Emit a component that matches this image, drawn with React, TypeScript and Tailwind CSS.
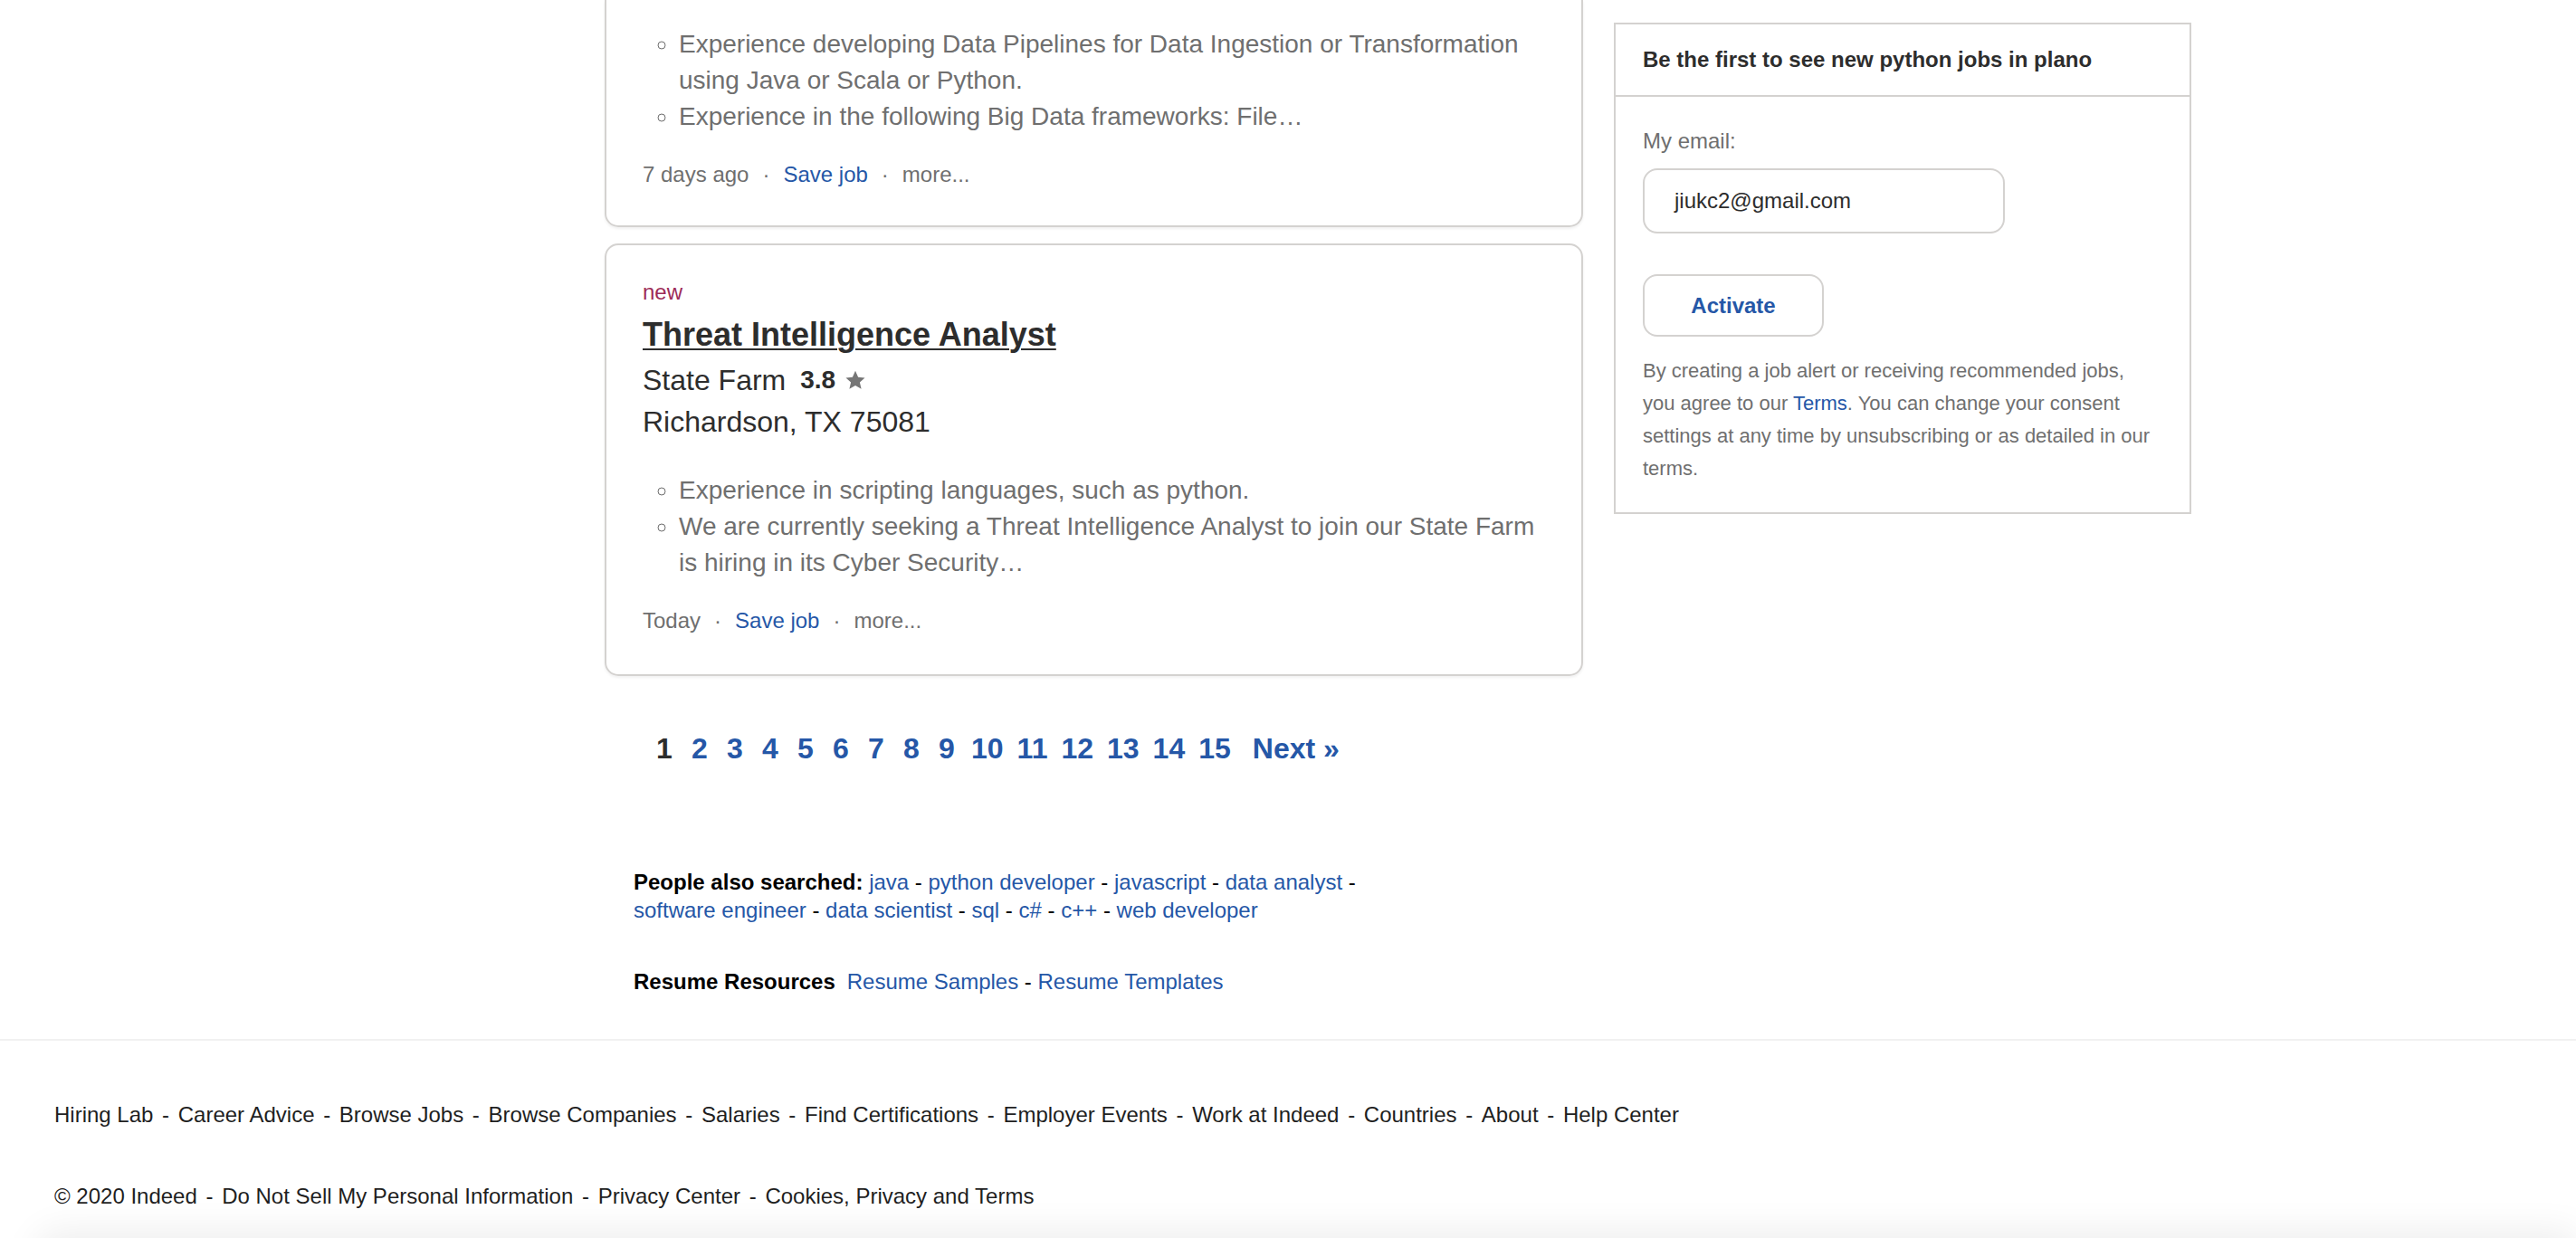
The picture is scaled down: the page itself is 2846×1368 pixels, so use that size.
const blue = "text-[#2557a7]";

function Dot() {
  return <span className="mx-[15px] text-[#6f6f6f]">·</span>;
}

function CardFooter({ age }: { age: string }) {
  return (
    <div className="mt-[26px] text-[24px] leading-[36px] text-[#6f6f6f]">
      <span>{age}</span>
      <Dot />
      <a className={blue}>Save job</a>
      <Dot />
      <span>more...</span>
    </div>
  );
}

function Snippet({ items }: { items: string[] }) {
  return (
    <ul className="list-[circle] pl-[40px] text-[28px] leading-[40px] text-[#6f6f6f]">
      {items.map((t) => (
        <li key={t}>{t}</li>
      ))}
    </ul>
  );
}

function Star() {
  return (
    <svg viewBox="0 0 24 24" className="ml-[10px] h-[24px] w-[24px] fill-[#767676]">
      <path d="M12 1.8l3.1 6.9 7.4.7-5.6 5 1.7 7.4L12 17.9l-6.6 3.9 1.7-7.4-5.6-5 7.4-.7z" />
    </svg>
  );
}

function Sep() {
  return <span className="mx-[3px]"> - </span>;
}

const pages = ["2", "3", "4", "5", "6", "7", "8", "9", "10", "11", "12", "13", "14", "15"];

const searches = [
  "java",
  "python developer",
  "javascript",
  "data analyst",
  "software engineer",
  "data scientist",
  "sql",
  "c#",
  "c++",
  "web developer",
];

const footerLinks = [
  "Hiring Lab",
  "Career Advice",
  "Browse Jobs",
  "Browse Companies",
  "Salaries",
  "Find Certifications",
  "Employer Events",
  "Work at Indeed",
  "Countries",
  "About",
  "Help Center",
];

const legalLinks = [
  "© 2020 Indeed",
  "Do Not Sell My Personal Information",
  "Privacy Center",
  "Cookies, Privacy and Terms",
];

export default function App() {
  return (
    <div className="relative min-h-screen overflow-hidden bg-white font-['Liberation_Sans',Arial,sans-serif] text-[#2d2d2d]">
      <div className="flex items-start pl-[668px]">
        {/* results column */}
        <div className="flex w-[1081px] flex-col">
          {/* previous card, cut off at the top */}
          <div className="rounded-b-[15px] border-x-2 border-b-2 border-[#d4d2d0] px-[40px] pb-[38px] pt-[29px] shadow-[0_2px_3px_rgba(0,0,0,0.06)]">
            <Snippet
              items={[
                "Experience developing Data Pipelines for Data Ingestion or Transformation using Java or Scala or Python.",
                "Experience in the following Big Data frameworks: File…",
              ]}
            />
            <CardFooter age="7 days ago" />
          </div>

          {/* job card */}
          <div className="mt-[18px] rounded-[15px] border-2 border-[#d4d2d0] px-[40px] pb-[41px] pt-[34px] shadow-[0_2px_3px_rgba(0,0,0,0.06)]">
            <div className="text-[24px] leading-[36px] text-[#9d2b57]">new</div>
            <h2 className="mt-[6px] text-[36px] font-bold leading-[46px] text-[#2d2d2d]">
              <a className="underline decoration-[2px] underline-offset-[3px]">Threat Intelligence Analyst</a>
            </h2>
            <div className="mt-[4px] flex items-center text-[32px] leading-[46px]">
              <span>State Farm</span>
              <span className="ml-[16px] text-[28px] font-bold">3.8</span>
              <Star />
            </div>
            <div className="text-[32px] leading-[46px]">Richardson, TX 75081</div>
            <div className="mt-[33px]">
              <Snippet
                items={[
                  "Experience in scripting languages, such as python.",
                  "We are currently seeking a Threat Intelligence Analyst to join our State Farm is hiring in its Cyber Security…",
                ]}
              />
            </div>
            <CardFooter age="Today" />
          </div>

          {/* pagination */}
          <div className="mt-[58px] flex items-center gap-[9px] pl-[51px] text-[32px] font-bold leading-[44px]">
            <span className="min-w-[30px] px-[3px] text-center text-[#2d2d2d]">1</span>
            {pages.map((p) => (
              <a key={p} className={`min-w-[30px] px-[3px] text-center ${blue}`}>
                {p}
              </a>
            ))}
            <a className={`ml-[12px] ${blue}`}>Next »</a>
          </div>

          {/* related searches */}
          <div className="mt-[110px] w-[860px] pl-[32px] text-[24px] leading-[31px] text-[#000]">
            <b>People also searched:</b>{" "}
            {searches.map((s, i) => (
              <span key={s}>
                <a className={blue}>{s}</a>
                {i < searches.length - 1 ? " - " : ""}
              </span>
            ))}
          </div>

          <div className="mt-[48px] pl-[32px] text-[24px] leading-[31px] text-[#000]">
            <b className="mr-[13px]">Resume Resources</b>
            <a className={blue}>Resume Samples</a> - <a className={blue}>Resume Templates</a>
          </div>
        </div>

        {/* job alert */}
        <aside className="ml-[34px] mt-[25px] w-[638px] border-2 border-[#d4d2d0]">
          <div className="flex h-[80px] items-center border-b-2 border-[#d4d2d0] px-[30px] text-[24px] font-bold">
            Be the first to see new python jobs in plano
          </div>
          <div className="px-[30px] pb-[30px] pt-[31px]">
            <div className="text-[24px] leading-[36px] text-[#6f6f6f]">My email:</div>
            <div className="mt-[12px] flex h-[72px] w-[400px] items-center rounded-[16px] border-2 border-[#d4d2d0] px-[33px] text-[24px] text-[#2d2d2d]">
              jiukc2@gmail.com
            </div>
            <button className="mt-[45px] h-[69px] w-[200px] rounded-[16px] border-2 border-[#d4d2d0] bg-white text-[24px] font-bold text-[#2557a7]">
              Activate
            </button>
            <p className="mt-[20px] w-[566px] text-[22px] leading-[36px] text-[#6f6f6f]">
              By creating a job alert or receiving recommended jobs, you agree to our{" "}
              <a className={blue}>Terms</a>. You can change your consent settings at any time by unsubscribing or as
              detailed in our terms.
            </p>
          </div>
        </aside>
      </div>

      {/* footer */}
      <footer className="mt-[48px] border-t-2 border-[#f1f1f1] px-[60px] pb-[40px] pt-[64px] text-[24px] leading-[36px] text-[#1f1f1f]">
        <div>
          {footerLinks.map((l, i) => (
            <span key={l}>
              <a>{l}</a>
              {i < footerLinks.length - 1 ? <Sep /> : null}
            </span>
          ))}
        </div>
        <div className="mt-[54px]">
          {legalLinks.map((l, i) => (
            <span key={l}>
              <a>{l}</a>
              {i < legalLinks.length - 1 ? <Sep /> : null}
            </span>
          ))}
        </div>
      </footer>

      {/* shadow of a bar sitting just below the fold */}
      <div className="fixed bottom-[-60px] left-[40px] right-0 h-[60px] rounded-tl-[24px] bg-white shadow-[0_-8px_40px_rgba(0,0,0,0.07)]" />
    </div>
  );
}
